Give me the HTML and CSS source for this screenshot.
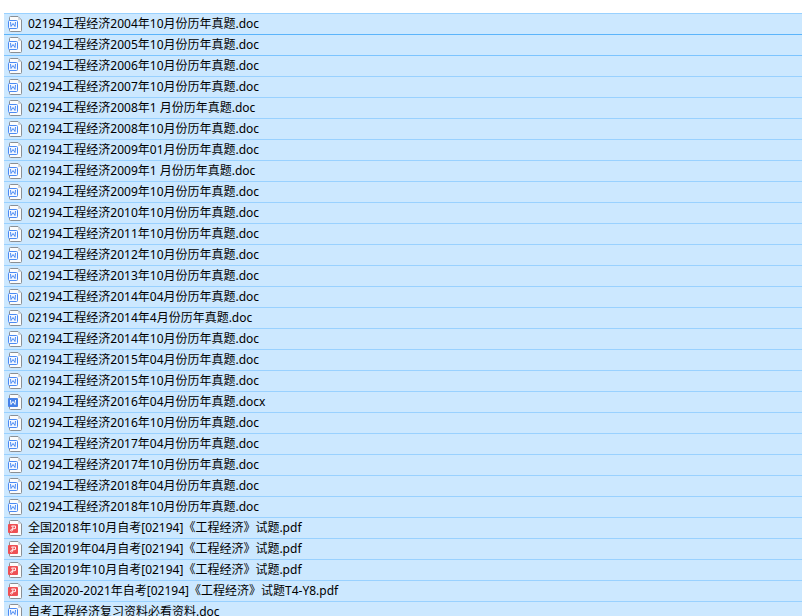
FILE: index.html
```html
<!DOCTYPE html>
<html lang="zh-CN">
<head>
<meta charset="utf-8">
<title>工程经济</title>
<link rel="stylesheet" href="styles.css">
</head>
<body>
<svg class="sprite" aria-hidden="true">
  <symbol id="page" viewBox="0 0 15 16">
    <path d="M2.500.5h7.500l3.500 3.500v10.500q0 1-1 1h-10q-1 0-1-1v-13q0-1 1-1z" fill="#fcfcfc" stroke="#8a8f94"/>
    <path d="M10 1v3h3z" fill="#d5d8db"/>
  </symbol>
  <symbol id="doc" viewBox="0 0 15 16">
    <use href="#page"/>
    <rect x=".5" y="4.500" width="9" height="8" rx="1" fill="#f4f8ff" stroke="#4a8af4"/>
    <path d="M2.500 6l.5 4.500 2-3 2 3 .5-4.500" fill="none" stroke="#4a8af4"/>
  </symbol>
  <symbol id="docx" viewBox="0 0 15 16">
    <use href="#page"/>
    <rect y="4" width="10" height="9" rx="1" fill="#4681e8"/>
    <path d="M2.500 6l.5 4.500 2-3 2 3 .5-4.500" fill="none" stroke="#fff"/>
  </symbol>
  <symbol id="pdf" viewBox="0 0 15 16">
    <use href="#page"/>
    <rect y="4" width="10" height="9" rx="1" fill="#ee5054"/>
    <path d="M3.500 6.500v-.5h4v2.500l-3.500.5q-1.500.5-1.500 1.500c.5 1 2 .5 2-.5l.5-4" fill="none" stroke="#ffecec"/>
  </symbol>
</svg>
<main>
<ul class="files" id="files"></ul>
</main>
<script src="files.js"></script>
</body>
</html>
```
FILE: styles.css
```css
body {
  margin: 0;
  background: #fff;
  color: #000;
  font: 12px/20px "Noto Sans", "Noto Sans CJK SC", sans-serif;
  overflow: hidden;
}

.sprite {
  display: none;
}

.files {
  list-style: none;
  margin: 13px 0 0 4px;
  padding: 0;
  border-top: 1px solid #99d1ff;
}

.file {
  display: flex;
  align-items: center;
  gap: 5px;
  height: 20px;
  padding-left: 4px;
  background: #cce8ff;
  border-bottom: 1px solid #99d1ff;
  white-space: pre;
}

.file:first-child {
  border-bottom-color: #5bb4fb;
}

.file:nth-child(2) {
  border-bottom-color: #7cc4ff;
}

.icon {
  width: 15px;
  height: 16px;
  flex: none;
}
```
FILE: files.js
```js
const exams = [
  "2004年10月", "2005年10月", "2006年10月", "2007年10月", "2008年1 月",
  "2008年10月", "2009年01月", "2009年1 月", "2009年10月", "2010年10月",
  "2011年10月", "2012年10月", "2013年10月", "2014年04月", "2014年4月",
  "2014年10月", "2015年04月", "2015年10月", "2016年04月", "2016年10月",
  "2017年04月", "2017年10月", "2018年04月", "2018年10月"
];
const names = exams.map(date =>
  `02194工程经济${date}份历年真题.${date === "2016年04月" ? "docx" : "doc"}`);
names.push(
  "全国2018年10月自考[02194]《工程经济》试题.pdf",
  "全国2019年04月自考[02194]《工程经济》试题.pdf",
  "全国2019年10月自考[02194]《工程经济》试题.pdf",
  "全国2020-2021年自考[02194]《工程经济》试题T4-Y8.pdf",
  "自考工程经济复习资料必看资料.doc"
);
document.getElementById("files").innerHTML = names.map(name =>
  `<li class="file"><svg class="icon" aria-hidden="true"><use href="#${name.split(".").pop()}"/></svg><span>${name}</span></li>`
).join("");
```
